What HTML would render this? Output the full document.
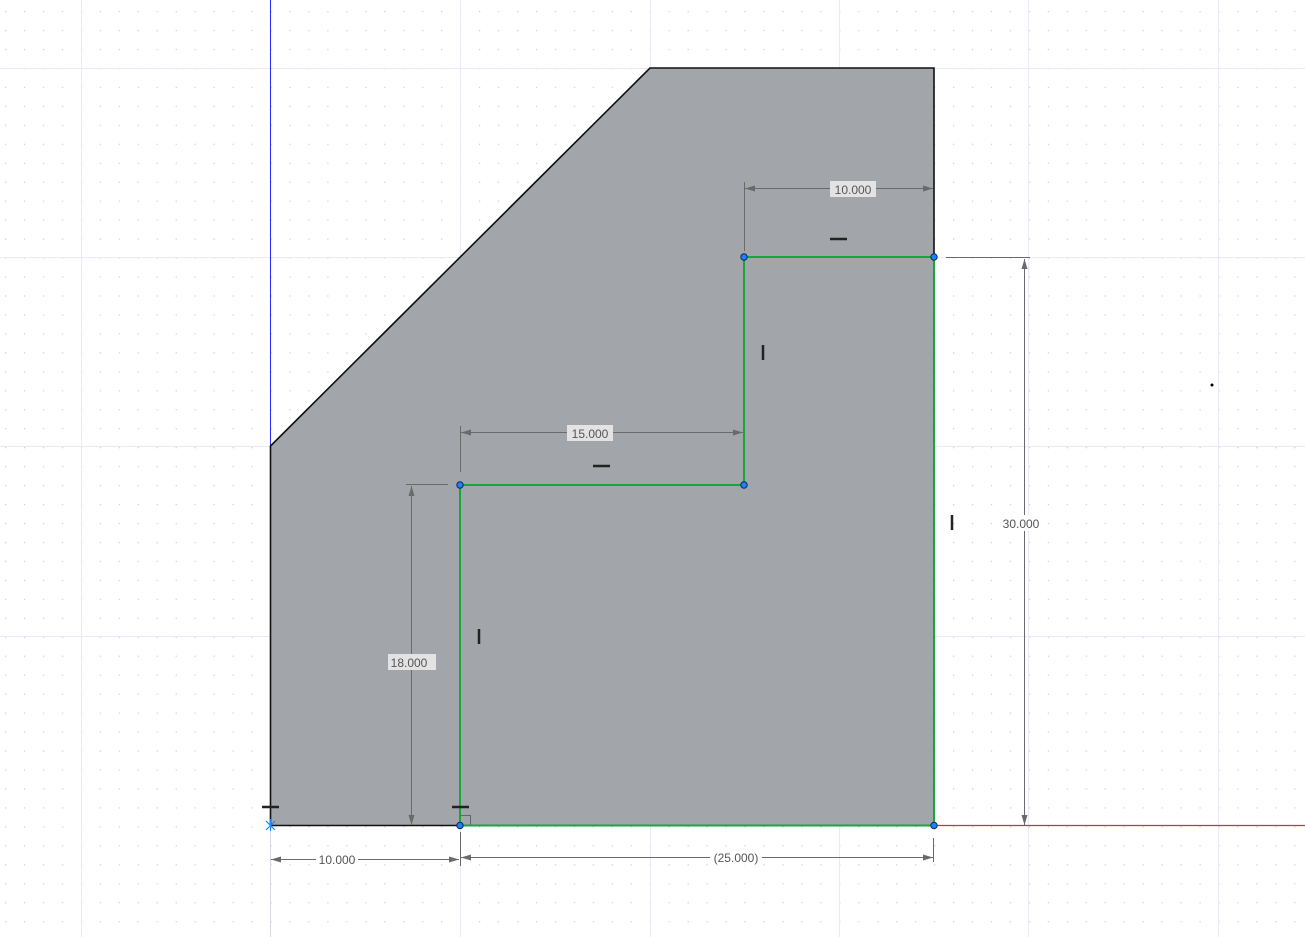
<!DOCTYPE html>
<html><head><meta charset="utf-8"><style>
html,body{margin:0;padding:0;background:#fff;width:1305px;height:937px;overflow:hidden}
svg{display:block}
text{font-family:"Liberation Sans",sans-serif;font-size:12px;fill:#555}
</style></head><body>
<svg width="1305" height="937" viewBox="0 0 1305 937" xmlns="http://www.w3.org/2000/svg">
<defs>
<pattern id="dots" x="5" y="11" width="18.96" height="18.96" patternUnits="userSpaceOnUse">
<rect x="0" y="0" width="1.2" height="1.2" fill="#c9c9df"/>
</pattern>
<marker id="ar" viewBox="0 0 10 6" refX="10" refY="3" markerWidth="10" markerHeight="6" orient="auto-start-reverse" markerUnits="userSpaceOnUse"><path d="M0,0 L10,3 L0,6 z" fill="#6a6a6a"/></marker>
</defs>
<rect width="1305" height="937" fill="url(#dots)"/>
<g stroke="#ebe9f8" stroke-width="1">
<line x1="81.5" y1="0" x2="81.5" y2="937"/><line x1="460.5" y1="0" x2="460.5" y2="937"/><line x1="650.5" y1="0" x2="650.5" y2="937"/><line x1="839.5" y1="0" x2="839.5" y2="937"/><line x1="1028.5" y1="0" x2="1028.5" y2="937"/><line x1="1218.5" y1="0" x2="1218.5" y2="937"/>
<line x1="0" y1="68.5" x2="1305" y2="68.5"/><line x1="0" y1="257.5" x2="1305" y2="257.5"/><line x1="0" y1="446.5" x2="1305" y2="446.5"/><line x1="0" y1="636.5" x2="1305" y2="636.5"/>
</g>
<line x1="270.5" y1="0" x2="270.5" y2="825" stroke="#2a2aff" stroke-width="1"/>
<line x1="270.5" y1="825" x2="270.5" y2="937" stroke="#d8d8e8" stroke-width="1"/>
<line x1="934" y1="825.5" x2="1305" y2="825.5" stroke="#cc3333" stroke-width="1.2"/>
<polygon points="270.5,825.5 270.5,446 650,68 934,68 934,825.5" fill="#a2a5a9" stroke="#111" stroke-width="1.6"/>
<polyline points="460,825.5 460,485 744,485 744,257 934,257 934,825.5 460,825.5" fill="none" stroke="#14a83a" stroke-width="2"/>
<g stroke="#6a6a6a" stroke-width="1" fill="none">
<line x1="744.5" y1="182" x2="744.5" y2="251"/>
<line x1="745" y1="188.5" x2="933" y2="188.5" marker-start="url(#ar)" marker-end="url(#ar)"/>
<line x1="460.5" y1="426" x2="460.5" y2="472"/>
<line x1="461" y1="432.5" x2="743" y2="432.5" marker-start="url(#ar)" marker-end="url(#ar)"/>
<line x1="406" y1="484.5" x2="448" y2="484.5"/>
<line x1="411.5" y1="486" x2="411.5" y2="825" marker-start="url(#ar)" marker-end="url(#ar)"/>
<line x1="946" y1="257.5" x2="1030" y2="257.5"/>
<line x1="1024.5" y1="259" x2="1024.5" y2="825" marker-start="url(#ar)" marker-end="url(#ar)"/>
<line x1="460.5" y1="832" x2="460.5" y2="866"/>
<line x1="271" y1="859.5" x2="459" y2="859.5" marker-start="url(#ar)" marker-end="url(#ar)"/>
<line x1="933.5" y1="838" x2="933.5" y2="862"/>
<line x1="461" y1="857.5" x2="933" y2="857.5" marker-start="url(#ar)" marker-end="url(#ar)"/>
</g>
<rect x="830" y="181" width="46" height="16" fill="#e3e3e3"/><text x="853" y="194" text-anchor="middle">10.000</text>
<rect x="567" y="425" width="46" height="16" fill="#e3e3e3"/><text x="590" y="438" text-anchor="middle">15.000</text>
<rect x="388" y="654" width="48" height="16" fill="#e3e3e3"/><text x="409" y="667" text-anchor="middle">18.000</text>
<rect x="1000" y="515" width="42" height="16" fill="#fff"/><text x="1021" y="528" text-anchor="middle">30.000</text>
<rect x="316" y="852" width="42" height="15" fill="#fff"/><text x="337" y="864" text-anchor="middle">10.000</text>
<rect x="710" y="850" width="52" height="15" fill="#fff"/><text x="736" y="862" text-anchor="middle">(25.000)</text>
<g stroke="#222" stroke-width="2.5">
<line x1="830" y1="239" x2="847" y2="239"/>
<line x1="593" y1="466" x2="610" y2="466"/>
<line x1="262" y1="807" x2="279" y2="807"/>
<line x1="452" y1="807" x2="469" y2="807"/>
<line x1="763" y1="345" x2="763" y2="360"/>
<line x1="952" y1="515" x2="952" y2="530"/>
<line x1="479" y1="629" x2="479" y2="644"/>
</g>
<polyline points="460,815.5 470.5,815.5 470.5,825" fill="none" stroke="#666" stroke-width="1"/>
<g stroke="#1e88ff" stroke-width="1.2"><line x1="266" y1="821" x2="275" y2="830"/><line x1="275" y1="821" x2="266" y2="830"/><line x1="270.5" y1="819" x2="270.5" y2="831"/></g>
<g fill="#1e7fff" stroke="#0a2a55" stroke-width="1">
<circle cx="460" cy="825.5" r="3.2"/><circle cx="460" cy="485" r="3.2"/><circle cx="744" cy="485" r="3.2"/><circle cx="744" cy="257" r="3.2"/><circle cx="934" cy="257" r="3.2"/><circle cx="934" cy="825.5" r="3.2"/>
</g>
<circle cx="1212" cy="385" r="1.5" fill="#000"/>
</svg>
</body></html>
